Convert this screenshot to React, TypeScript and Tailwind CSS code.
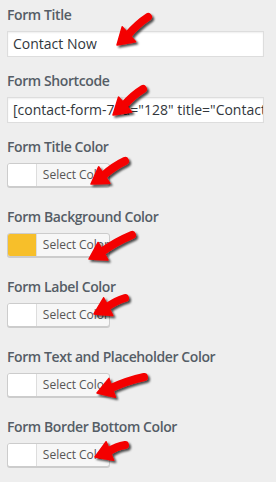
type Pt = [number, number];

const arrows: { tail: Pt; tip: Pt }[] = [
  { tail: [148, 17], tip: [117, 45] },
  { tail: [143, 89], tip: [113, 115] },
  { tail: [125, 161], tip: [91, 184] },
  { tail: [132, 235], tip: [89, 259] },
  { tail: [125, 298], tip: [94, 314] },
  { tail: [144, 377], tip: [97, 393] },
  { tail: [125, 445], tip: [95, 457] },
];

function Arrow({ tail, tip }: { tail: Pt; tip: Pt }) {
  const dx = tip[0] - tail[0];
  const dy = tip[1] - tail[1];
  const len = Math.hypot(dx, dy);
  const ux = dx / len;
  const uy = dy / len;
  const nx = -uy;
  const ny = ux;
  const head = 16;
  const half = 10;
  const bx = tip[0] - ux * head;
  const by = tip[1] - uy * head;
  // slight bend in the shaft
  const mx = (tail[0] + bx) / 2 + nx * 2;
  const my = (tail[1] + by) / 2 + ny * 2;
  const pts = [
    [bx + nx * half, by + ny * half],
    tip,
    [bx - nx * half, by - ny * half],
  ]
    .map((p) => p.join(","))
    .join(" ");
  return (
    <g filter="url(#shadow)">
      <path
        d={`M${tail[0]} ${tail[1]} Q${mx} ${my} ${bx + ux * 2} ${by + uy * 2}`}
        stroke="#f40000"
        strokeWidth="8"
        strokeLinecap="round"
        fill="none"
      />
      <polygon points={pts} fill="#f40000" strokeLinejoin="round" stroke="#f40000" strokeWidth="1.5" />
    </g>
  );
}

function Label({ children }: { children: string }) {
  return (
    <div className="h-5 text-[14px] leading-5 font-semibold tracking-[-0.4px] text-[#555d66] whitespace-nowrap">
      {children}
    </div>
  );
}

function TextField({ value }: { value: string }) {
  return (
    <div className="mt-1.5 mb-3.5 h-[26px] w-[257px] border border-[#dddddd] bg-white px-[5px] text-[14px] leading-[24px] text-[#32373c] overflow-hidden whitespace-nowrap shadow-[inset_0_1px_2px_rgba(0,0,0,0.07)]">
      {value}
    </div>
  );
}

function ColorField({ label, color = "#ffffff" }: { label: string; color?: string }) {
  return (
    <div className="mb-5">
      <Label>{label}</Label>
      <div className="mt-1.5 flex h-6 w-[103px] overflow-hidden rounded-[3px] border border-[#cccccc] bg-[#f7f7f7] shadow-[0_1px_0_#cccccc]">
        <div className="w-[30px] border-r border-[#dddddd]" style={{ backgroundColor: color }} />
        <div className="flex-1 pl-[6px] text-[12px] leading-[22px] text-[#555555] whitespace-nowrap">
          Select Color
        </div>
      </div>
    </div>
  );
}

export default function App() {
  return (
    <div
      className="relative h-[482px] w-[276px] bg-[#eeeeee] px-[7px] pt-[5px] overflow-hidden"
      style={{ fontFamily: '"Open Sans", "Noto Sans", sans-serif' }}
    >
      <Label>Form Title</Label>
      <TextField value="Contact Now" />
      <Label>Form Shortcode</Label>
      <TextField value={'[contact-form-7 id="128" title="Contact Now"]'} />
      <ColorField label="Form Title Color" />
      <ColorField label="Form Background Color" color="#f7bf2a" />
      <ColorField label="Form Label Color" />
      <ColorField label="Form Text and Placeholder Color" />
      <ColorField label="Form Border Bottom Color" />

      <svg className="absolute inset-0 pointer-events-none" width="276" height="482">
        <defs>
          <filter id="shadow" x="-30%" y="-30%" width="160%" height="160%">
            <feDropShadow dx="2" dy="2" stdDeviation="1.2" floodColor="#000" floodOpacity="0.7" />
          </filter>
        </defs>
        {arrows.map((a, i) => (
          <Arrow key={i} tail={a.tail} tip={a.tip} />
        ))}
      </svg>
    </div>
  );
}
